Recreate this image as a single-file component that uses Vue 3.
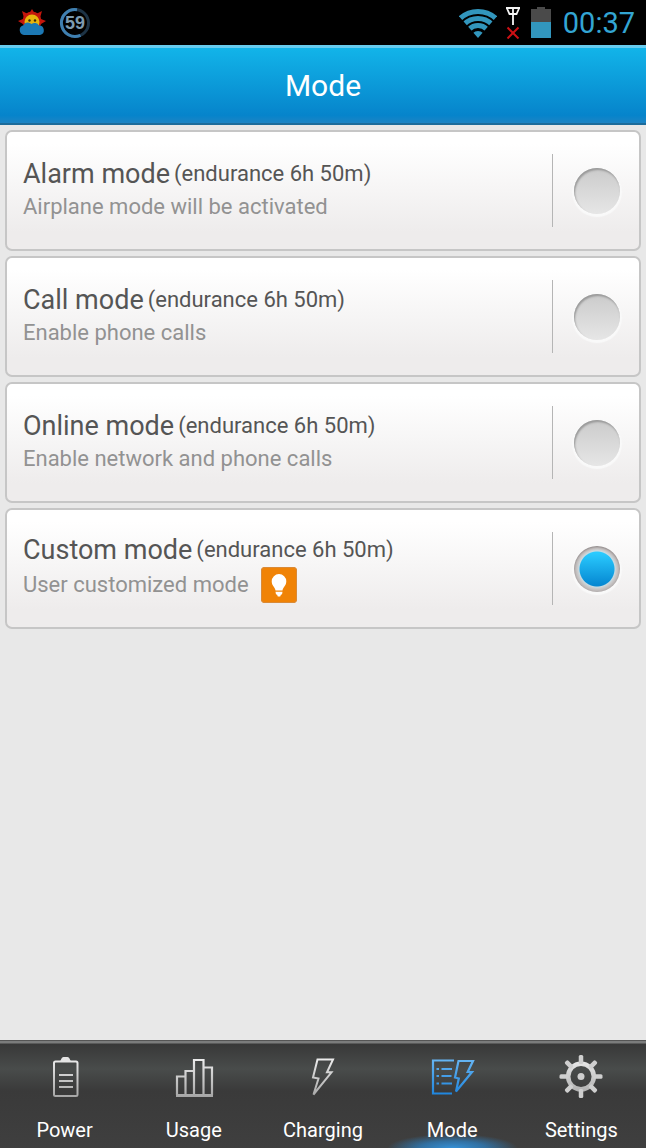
<script setup>
import { ref } from 'vue'

const modes = [
  { id: 'alarm', name: 'Alarm mode', note: 'Airplane mode will be activated' },
  { id: 'call', name: 'Call mode', note: 'Enable phone calls' },
  { id: 'online', name: 'Online mode', note: 'Enable network and phone calls' },
  { id: 'custom', name: 'Custom mode', note: 'User customized mode', tip: true }
]
const selected = ref('custom')
const tabs = ['Power', 'Usage', 'Charging', 'Mode', 'Settings']
const current = ref('Mode')
const spokes = [0, 45, 90, 135, 180, 225, 270, 315]
</script>

<template>
  <div class="screen">
    <div class="status">
      <svg class="weather" viewBox="0 0 28 28" width="28" height="28" aria-hidden="true">
        <g fill="#c4160c">
          <path d="M14 0l3 5h-6zM4 2l6 3-4 4zM24 2l-2 7-4-4zM0 12l5-2v5zM28 12l-5-2v5z" />
          <circle cx="14" cy="12" r="9.500" />
        </g>
        <circle cx="14" cy="13" r="7.500" fill="#e9b40c" />
        <circle cx="11.500" cy="11.500" r="1.200" fill="#3b2a08" />
        <circle cx="17" cy="11.500" r="1.200" fill="#3b2a08" />
        <path d="M6 26a5 5 0 0 1-.5-9.800a5 5 0 0 1 8-1.200a5 5 0 0 1 7.500 1.500a4.800 4.800 0 0 1 1 9.500z" fill="#1c78b4" />
      </svg>
      <span class="level">
        <svg viewBox="0 0 32 32" width="32" height="32" aria-hidden="true">
          <circle cx="16" cy="16" r="13.500" fill="none" stroke="#1d3345" stroke-width="3" />
          <path d="M21.500 28.300A13.500 13.500 0 1 1 18 2.650" fill="none" stroke="#3f7fb0" stroke-width="3" />
        </svg>
        <span class="level-text">59</span>
      </span>
      <span class="spacer"></span>
      <svg class="wifi" viewBox="0 0 38 30" width="38" height="30" aria-hidden="true">
        <clipPath id="fan"><path d="M19 30L-1 7V0h40v7z" /></clipPath>
        <g clip-path="url(#fan)" fill="none" stroke="#3296bd" stroke-width="5">
          <circle cx="19" cy="30" r="26.500" />
          <circle cx="19" cy="30" r="19.500" />
          <circle cx="19" cy="30" r="12.500" />
          <circle cx="19" cy="30" r="3.500" stroke-width="7" />
        </g>
      </svg>
      <svg class="signal" viewBox="0 0 16 32" width="16" height="32" aria-hidden="true">
        <path d="M1 1h14M2 1.500l2.500 5.500h7l2.500-5.500M8 1v17" fill="none" stroke="#f4f4f4" stroke-width="1.800" />
        <path d="M2.500 20.500l11 11M13.500 20.500L2.500 31.500" stroke="#cc1014" stroke-width="2" />
      </svg>
      <svg class="battery" viewBox="0 0 20 31" width="20" height="31" aria-hidden="true">
        <path d="M6 0h8v2h6v14H0V2h6z" fill="#4a4a4a" />
        <path d="M0 15h20v16H0z" fill="#3296bd" />
      </svg>
      <span class="clock">00:37</span>
    </div>

    <header class="title"><h1>Mode</h1></header>

    <main class="list">
      <div v-for="m in modes" :key="m.id" class="card">
        <div class="text">
          <label class="heading" :for="m.id">
            <span class="name">{{ m.name }}</span>
            <span class="endurance">(endurance 6h 50m)</span>
          </label>
          <div class="detail">
            <span>{{ m.note }}</span>
            <button v-if="m.tip" class="tip" type="button" aria-label="Customize">
              <svg viewBox="0 0 36 36" width="36" height="36" aria-hidden="true">
                <path
                  d="M18 7a7.300 7.300 0 0 1 7.300 7.300c0 4.500-3.300 6-3.800 9.200h-7c-.5-3.200-3.800-4.700-3.800-9.200A7.300 7.300 0 0 1 18 7zM14.500 24.800h7l-.5 2.700h-1l-.8 2h-2.400l-.8-2h-1z"
                  fill="#fff"
                />
              </svg>
            </button>
          </div>
        </div>
        <div class="choice">
          <input :id="m.id" v-model="selected" type="radio" name="mode" :value="m.id" />
        </div>
      </div>
    </main>

    <nav class="tabs">
      <button
        v-for="t in tabs"
        :key="t"
        type="button"
        class="tab"
        :class="{ active: t === current }"
        @click="current = t"
      >
        <svg viewBox="0 0 48 48" width="48" height="48" aria-hidden="true">
          <defs>
            <linearGradient :id="'tone-' + t" gradientUnits="userSpaceOnUse" x1="0" y1="3" x2="0" y2="43">
              <stop offset="0" :stop-color="t === current ? '#6bb8f4' : '#f0f0f0'" />
              <stop offset="1" :stop-color="t === current ? '#1a82dc' : '#a6a6a6'" />
            </linearGradient>
          </defs>
          <g v-if="t === 'Power'" :stroke="`url(#tone-${t})`" fill="none" stroke-width="2">
            <rect x="13" y="7.500" width="23.500" height="34.500" rx="1.500" />
            <path d="M19 7.500l1.500-3q.5-1.500 2-1.500h4q1.500 0 2 1.500l1.500 3z" fill="#e4e4e4" stroke="none" />
            <path d="M18 21h14M18 27h14M18 33h14" />
          </g>
          <g v-else-if="t === 'Usage'" :stroke="`url(#tone-${t})`" fill="none" stroke-width="2.200">
            <path d="M7 41V22.500h8M15.500 41V17H24M24 41V6h9.500v35M33.500 13.500H42V41" />
            <path d="M6 41.500h37" stroke-width="3" />
          </g>
          <path
            v-else-if="t === 'Charging'"
            d="M18.500 5.500H34L28 18.300h4.500L14.500 40.500L19.500 24.500L14 23.500z"
            fill="none"
            :stroke="`url(#tone-${t})`"
            stroke-width="2"
          />
          <g v-else-if="t === 'Mode'" :stroke="`url(#tone-${t})`" fill="none" stroke-width="2.200">
            <path d="M26 6.500H5v33h19" />
            <path d="M8.500 15h2.500M8.500 22h2.500M8.500 29.500h2.500M13.500 15H24M13.500 22h10M13.500 29.500H24" />
            <path d="M30.500 7H45L39.700 18h4.300L28 37.500L30.800 24.500L27 23.500z" />
          </g>
          <g v-else :stroke="`url(#tone-${t})`" fill="none">
            <circle cx="24" cy="22.500" r="12.800" stroke-width="4.500" />
            <circle cx="24" cy="22.500" r="3.500" fill="#cfcfcf" stroke="none" />
            <rect
              v-for="a in spokes"
              :key="a"
              x="21.750"
              y="1"
              width="4.500"
              height="9"
              rx="1.500"
              fill="#cfcfcf"
              stroke="none"
              :transform="`rotate(${a} 24 22.5)`"
            />
          </g>
        </svg>
        <span class="caption">{{ t }}</span>
      </button>
    </nav>
  </div>
</template>

<style>
body {
  margin: 0;
  background: #e8e8e8;
}
</style>

<style scoped>
.screen {
  display: flex;
  flex-direction: column;
  min-height: 100vh;
  font-family: Roboto, "Noto Sans", sans-serif;
  color: #555;
}

.status {
  display: flex;
  align-items: center;
  height: 45px;
  box-sizing: border-box;
  padding: 0 11px 0 18px;
  background: #000;
}
.level {
  display: grid;
  place-items: center;
  margin-left: 13px;
}
.level > * {
  grid-area: 1 / 1;
}
.level-text {
  font-family: "Liberation Sans", sans-serif;
  font-size: 18px;
  font-weight: 700;
  line-height: 20px;
  color: #7d9bb0;
}
.spacer {
  flex: 1;
}
.signal {
  margin-left: 8px;
}
.battery {
  margin-left: 10px;
}
.clock {
  margin-left: 12px;
  font-size: 29px;
  line-height: 34px;
  color: #33a5d3;
}

.title {
  display: flex;
  align-items: center;
  justify-content: center;
  height: 80px;
  box-sizing: border-box;
  padding-top: 1px;
  border-top: 3px solid #67cbee;
  border-bottom: 2px solid #1c6c9b;
  background: linear-gradient(#12b4e9, #0684cb 90%, #1d84c4);
}
.title h1 {
  margin: 0;
  font-size: 30px;
  font-weight: 400;
  line-height: 36px;
  color: #fff;
}

.list {
  flex: 1;
  display: flex;
  flex-direction: column;
  gap: 5px;
  padding: 5px 5px 24px;
}
.card {
  display: flex;
  align-items: center;
  min-height: 121px;
  box-sizing: border-box;
  border: 2px solid #c6c6c6;
  border-radius: 7px;
  background: linear-gradient(#fff 10%, #eeecec 85%);
}
.text {
  flex: 1;
  padding: 0 0 2px 16px;
}
.heading {
  display: flex;
  align-items: center;
  gap: 4px;
}
.name {
  font-size: 27px;
  line-height: 34px;
}
.endurance {
  font-size: 22px;
  line-height: 32px;
}
.detail {
  display: flex;
  align-items: center;
  gap: 12px;
  font-size: 22px;
  line-height: 32px;
  color: #929292;
}
.tip {
  width: 36px;
  height: 36px;
  padding: 0;
  border: 0;
  border-radius: 4px;
  background: #f08306;
  box-shadow: inset 0 0 0 1px #d98a38;
}
.tip svg {
  display: block;
}
.choice {
  display: flex;
  justify-content: center;
  align-items: center;
  width: 84px;
  height: 73px;
  padding-left: 2px;
  border-left: 1px solid #b5b5b5;
}
.choice input {
  appearance: none;
  width: 46px;
  height: 46px;
  margin: 0;
  border-radius: 50%;
  background: linear-gradient(#cbcbcb, #e6e6e6);
  box-shadow: inset 1px 2px 2px #999, 0 1px 1px 2px #f9f9f9;
}
.choice input:checked {
  background:
    radial-gradient(circle, transparent 17px, #c9dbe2 18px, #c9c6c6 20px, #b5b0b0 23px),
    linear-gradient(#2acbff 15%, #0688d2 85%);
  box-shadow: inset 0 1px 2px #8f8888, 0 1px 1px 2px #f9f9f9;
}

.tabs {
  display: grid;
  grid-template-columns: repeat(5, 1fr);
  height: 108px;
  box-sizing: border-box;
  border-top: 1px solid #555;
  background: linear-gradient(#7b7c7c 2px, #383838 3px, #494c4b 28px, #3a3a3a 50px, #3f3f3f);
}
.tab {
  display: flex;
  flex-direction: column;
  align-items: center;
  padding: 13px 0 0;
  border: 0;
  background: none;
  font-family: inherit;
  color: #fff;
}
.tab.active {
  background: radial-gradient(ellipse 65px 14px at 50% 100%, #3590d6, #2c86cdb0 50%, transparent);
}
.caption {
  margin-top: 15px;
  font-size: 20px;
  line-height: 26px;
}
</style>
